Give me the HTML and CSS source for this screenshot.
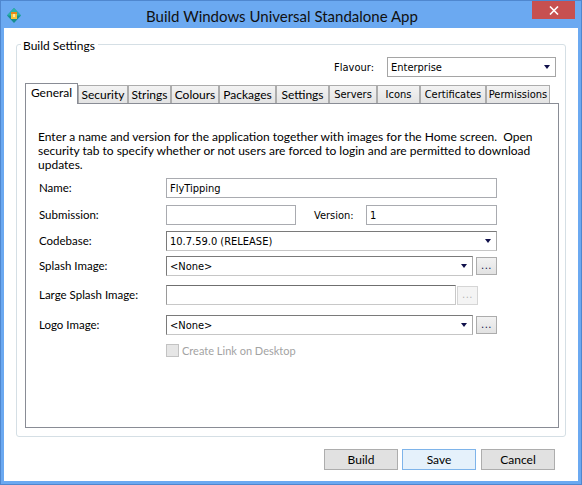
FILE: index.html
```html
<!DOCTYPE html>
<html>
<head>
<meta charset="utf-8">
<link rel="stylesheet" href="styles.css">
</head>
<body>
<div class="window">
  <div class="titlebar">
    <svg class="app-icon" width="14" height="15" viewBox="0 0 14 15">
      <path d="M7 0 L14 7.5 L7 15 L0 7.5 Z" fill="#178f8e"/>
      <path d="M7 0 L14 7.5 L7 7.5 L0 7.5 Z" fill="#2bb2aa"/>
      <rect x="4" y="4" width="6" height="7" fill="#f5c23a"/>
      <rect x="4" y="4" width="6" height="2" fill="#e5861c"/>
      <rect x="6" y="6" width="2" height="3" fill="#fbe9a6"/>
    </svg>
    <div class="title">Build Windows Universal Standalone App</div>
    <div class="close">
      <svg width="10" height="9" viewBox="0 0 10 9"><path d="M1 0.5 L9 8.5 M9 0.5 L1 8.5" stroke="#fff" stroke-width="1.6"/></svg>
    </div>
  </div>
  <div class="client">
    <div class="groupbox">
      <div class="legend">Build Settings</div>
      <div class="flavour-row">
        <span class="tlabel flavour-label">Flavour:</span>
        <div class="combo combo-flavour"><span class="value">Enterprise</span><i class="arrow"></i></div>
      </div>
      <div class="tabs">
        <div class="tabstrip">
          <div class="tab active w-general">General</div>
          <div class="tab w-security">Security</div>
          <div class="tab w-strings">Strings</div>
          <div class="tab w-colours">Colours</div>
          <div class="tab w-packages">Packages</div>
          <div class="tab w-settings">Settings</div>
          <div class="tab tfont w-servers">Servers</div>
          <div class="tab tfont w-icons">Icons</div>
          <div class="tab tfont w-certs">Certificates</div>
          <div class="tab tfont w-perms">Permissions</div>
        </div>
        <div class="tabpanel">
          <p class="desc">Enter a name and version for the application together with images for the Home screen.&nbsp; Open<br>security tab to specify whether or not users are forced to login and are permitted to download<br>updates.</p>
          <div class="form">
            <span class="label">Name:</span>
            <div class="field"><div class="textbox w-full"><span class="value">FlyTipping</span></div></div>

            <span class="label">Submission:</span>
            <div class="field">
              <div class="textbox w-half"></div>
              <span class="tlabel version-label">Version:</span>
              <div class="textbox w-half2"><span class="value">1</span></div>
            </div>

            <span class="label">Codebase:</span>
            <div class="field"><div class="combo w-full"><span class="value">10.7.59.0 (RELEASE)</span><i class="arrow"></i></div></div>

            <span class="label">Splash Image:</span>
            <div class="field">
              <div class="combo w-combo"><span class="value">&lt;None&gt;</span><i class="arrow"></i></div>
              <div class="dots">...</div>
            </div>

            <span class="label">Large Splash Image:</span>
            <div class="field">
              <div class="textbox dark-top w-large"></div>
              <div class="dots disabled">...</div>
            </div>

            <span class="label">Logo Image:</span>
            <div class="field">
              <div class="combo w-combo"><span class="value">&lt;None&gt;</span><i class="arrow"></i></div>
              <div class="dots">...</div>
            </div>

            <span class="label"></span>
            <div class="field check-field">
              <span class="checkbox"></span>
              <span class="check-label">Create Link on Desktop</span>
            </div>
          </div>
        </div>
      </div>
    </div>
    <div class="buttons">
      <div class="btn">Build</div>
      <div class="btn default">Save</div>
      <div class="btn cancel">Cancel</div>
    </div>
  </div>
</div>
</body>
</html>
```
FILE: styles.css
```css
* { box-sizing: border-box; }
html, body { margin: 0; padding: 0; }
body {
  width: 582px;
  height: 485px;
  overflow: hidden;
  font-family: "Lato", "Liberation Sans", sans-serif;
  font-size: 12px;
  color: #000;
}
.window {
  width: 582px;
  height: 485px;
  border: 1px solid #4f87cf;
  background: #6ba9f1;
  display: flex;
  flex-direction: column;
}
.titlebar {
  height: 27px;
  display: flex;
  align-items: flex-start;
  flex: none;
}
.app-icon { margin: 7px 0 0 6px; flex: none; }
.title {
  flex: 1;
  text-align: center;
  font-size: 15px;
  line-height: 16px;
  padding-top: 7px;
  padding-left: 11px;
  color: #111;
  white-space: nowrap;
}
.close {
  width: 43px;
  height: 18px;
  margin-right: 6px;
  background: #c75050;
  display: flex;
  align-items: center;
  justify-content: center;
  flex: none;
}
.client {
  flex: 1;
  background: #fff;
  margin: 0 3px 3px 3px;
  display: flex;
  flex-direction: column;
}
.groupbox {
  margin: 16px 12px 0 12px;
  border: 1px solid #d5dfe5;
  border-radius: 3px;
  display: flex;
  flex-direction: column;
}
.legend {
  align-self: flex-start;
  margin: -7px 0 0 4px;
  padding: 0 3px 0 2px;
  background: #fff;
  line-height: 16px;
  height: 16px;
}
.tlabel {
  font-family: "DejaVu Sans Condensed", "DejaVu Sans", sans-serif;
  font-stretch: condensed;
  font-size: 11px;
}
.flavour-row {
  margin-top: 3px;
  height: 20px;
  display: flex;
  justify-content: flex-end;
  align-items: center;
  padding-right: 9px;
}
.flavour-label { margin-right: 13px; }
.combo, .textbox {
  height: 20px;
  display: flex;
  align-items: center;
  position: relative;
  background: #fff;
  font-family: "DejaVu Sans Condensed", "DejaVu Sans", sans-serif;
  font-stretch: condensed;
  font-size: 11px;
}
.combo {
  border: 1px solid;
  border-color: #7a7a7a #a9a9a9 #c6c6c6 #7a7a7a;
}
.combo-flavour {
  width: 169px;
  border-color: #a5a5a5;
}
.textbox { border: 1px solid #a9abb0; }
.textbox.dark-top { border-color: #6f6f6f #c8c8c8 #c8c8c8 #9a9a9a; }
.value { padding-left: 3px; white-space: nowrap; }
.arrow {
  position: absolute;
  right: 5px;
  top: 7px;
  width: 0;
  height: 0;
  border-left: 3.5px solid transparent;
  border-right: 3.5px solid transparent;
  border-top: 4px solid #10104a;
}
.tabs {
  margin: 6px 6px 8px 8px;
  display: flex;
  flex-direction: column;
}
.tabstrip {
  height: 20px;
  display: flex;
  align-items: flex-end;
  position: relative;
  z-index: 1;
}
.tab {
  height: 18px;
  border: 1px solid #acacac;
  border-bottom: none;
  background: linear-gradient(#f3f3f3, #e3e3e3);
  text-align: center;
  line-height: 17px;
  white-space: nowrap;
  flex: none;
}
.tab.tfont {
  font-family: "DejaVu Sans Condensed", "DejaVu Sans", sans-serif;
  font-stretch: condensed;
  font-size: 11px;
}
.tab.active {
  height: 21px;
  margin-bottom: -1px;
  background: #fff;
  border-color: #898c95;
  line-height: 18px;
}
.w-general { width: 53px; }
.w-security { width: 50px; }
.w-strings { width: 43px; }
.w-colours { width: 48px; }
.w-packages { width: 57px; }
.w-settings { width: 53px; }
.w-servers { width: 48px; }
.w-icons { width: 43px; }
.w-certs { width: 66px; }
.w-perms { width: 64px; }
.tabpanel {
  height: 325px;
  border: 1px solid #898c95;
  padding: 26px 0 0 12px;
}
.desc {
  margin: 0;
  line-height: 14px;
  white-space: nowrap;
}
.form {
  margin-top: 6px;
  display: grid;
  grid-template-columns: 127px 331px;
  grid-template-rows: 27px 26px 25px 29px 30px 28px 14px;
  padding-left: 1px;
}
.label {
  height: 20px;
  line-height: 20px;
  font-size: 11.5px;
  white-space: nowrap;
}
.field {
  display: flex;
  align-items: center;
  height: 20px;
}
.w-full { width: 331px; }
.w-half { width: 130px; }
.w-half2 { width: 131px; }
.version-label { width: 52px; margin-left: 18px; }
.w-combo { width: 307px; }
.w-large { width: 290px; }
.dots {
  width: 21px;
  height: 18px;
  margin-left: 3px;
  border: 1px solid #acacac;
  background: linear-gradient(#f2f2f2, #e2e2e2);
  font-family: "DejaVu Sans", sans-serif;
  font-size: 10px;
  line-height: 15px;
  text-align: center;
  color: #10104a;
  letter-spacing: 0.5px;
}
.dots.disabled {
  margin-left: 1px;
  height: 19px;
  background: #f4f4f4;
  border-color: #d5d5d5;
  color: #b5b5b5;
}
.check-field { height: 14px; }
.checkbox {
  width: 13px;
  height: 13px;
  border: 1px solid #c3c3c3;
  background: #e6e6e6;
  margin-right: 3px;
}
.check-label {
  color: #a3a3a3;
  font-size: 11px;
  white-space: nowrap;
}
.buttons {
  margin-top: 12px;
  display: flex;
  justify-content: flex-end;
  padding-right: 23px;
}
.btn {
  width: 74px;
  height: 21px;
  border: 1px solid #adadad;
  background: #e1e1e1;
  text-align: center;
  line-height: 19px;
}
.btn.default {
  margin-left: 4px;
  background: #e5f1fb;
  border-color: #7eb4ea;
}
.btn.cancel { margin-left: 5px; }
```
